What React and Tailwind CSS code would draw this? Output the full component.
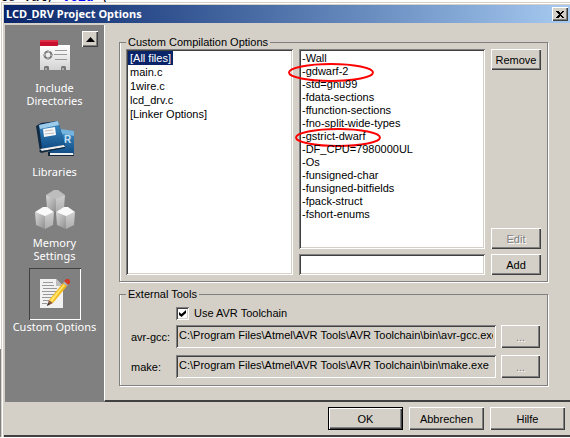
const FILES = ['[All files]', 'main.c', '1wire.c', 'lcd_drv.c', '[Linker Options]'];

const FLAGS = [
  { text: '-Wall' },
  { text: '-gdwarf-2', ring: '-left-[14px]' },
  { text: '-std=gnu99' },
  { text: '-fdata-sections' },
  { text: '-ffunction-sections' },
  { text: '-fno-split-wide-types' },
  { text: '-gstrict-dwarf', ring: '-left-[7px]' },
  { text: '-DF_CPU=7980000UL' },
  { text: '-Os' },
  { text: '-funsigned-char' },
  { text: '-funsigned-bitfields' },
  { text: '-fpack-struct' },
  { text: '-fshort-enums' },
];

const RAISED =
  'bg-[#d4d0c8] shadow-[inset_1px_1px_#fff,inset_-1px_-1px_#404040,inset_-2px_-2px_#808080]';
const SUNKEN =
  'shadow-[inset_1px_1px_#808080,inset_-1px_-1px_#fff,inset_2px_2px_#404040,inset_-2px_-2px_#d4d0c8]';

function Button({ className = '', disabled, children, ...rest }) {
  return (
    <button
      type="button"
      disabled={disabled}
      className={`flex items-center justify-center ${RAISED} ${
        disabled ? 'text-[#808080] [text-shadow:1px_1px_#fff]' : ''
      } ${className}`}
      {...rest}
    >
      {children}
    </button>
  );
}

function Group({ title, className = '', children }) {
  return (
    <fieldset className="min-w-0 border border-[#808080] px-1.5 shadow-[1px_1px_#fff,inset_1px_0_#fff]">
      <legend className="h-[13px] px-0.5 leading-[13px]">{title}</legend>
      <div className={className}>{children}</div>
    </fieldset>
  );
}

function IncludeIcon() {
  return (
    <svg width="32" height="32" viewBox="0 0 32 32">
      <defs>
        <linearGradient id="card" x1="0" y1="0" x2="0" y2="1">
          <stop offset="0" stopColor="#fff" />
          <stop offset="1" stopColor="#d2d2d2" />
        </linearGradient>
      </defs>
      <path d="M1 1h18v7H1z" fill="#c8102e" />
      <path d="M1 1h18v2H1z" fill="#dc3048" />
      <path d="M1 7h17l2-1h11v25H1z" fill="url(#card)" />
      <g fill="none" stroke="#777" strokeWidth="2">
        <circle cx="9" cy="16" r="3.5" strokeDasharray="3.5 2" strokeDashoffset="-1" />
        <path d="M9 11v3M9 18v3M4 16h3M11 16h3" strokeWidth="1" />
      </g>
      <path d="M16 11.5h12M15 15.5h13M16 20.5h12" stroke="#999" />
      <path d="M5 31v-3l1-1h3l1 1v3zM22 31v-3l1-1h3l1 1v3z" fill="#777" />
      <path d="M6 29h2v2H6zM23 29h2v2h-2z" fill="#aaa" />
    </svg>
  );
}

function LibrariesIcon() {
  return (
    <svg width="40" height="36" viewBox="0 0 40 36">
      <defs>
        <linearGradient id="book" x1="0" y1="0" x2="0" y2="1">
          <stop offset="0" stopColor="#3d8fc8" />
          <stop offset="1" stopColor="#114c85" />
        </linearGradient>
      </defs>
      <path d="M22 8l17 2v23H14v-4z" fill="url(#book)" />
      <path d="M14 32h24v2H14z" fill="#eee" />
      <path d="M13 31h2v3h24v1H13z" fill="#12263a" />
      <path d="M25 8l14 2v5l-12-2z" fill="#73b3de" />
      <text x="29" y="22" fontSize="10" fontWeight="bold" fill="#c8e3f5" fontFamily="Liberation Sans, sans-serif">
        R
      </text>
      <path d="M1 5l5-3 17-2 7 25-25 6z" fill="#102a44" />
      <path d="M4 4l19-4 7 24-23 4z" fill="url(#book)" />
      <path d="M4 4l19-4 1 4L5 8z" fill="#9dcbea" />
      <path d="M8 8l12-2 1 8-12 2z" fill="#f5f7f9" />
      <path d="M10 10l8-1M10 13l9-1" stroke="#bbb" />
      <path d="M5 28l24-4 1 2-23 4z" fill="#eee" />
      <path d="M4 30l2 2 24-5v-1L7 30z" fill="#12263a" />
    </svg>
  );
}

function Cube({ x, y, top }) {
  return (
    <g transform={`translate(${x} ${y})`}>
      <path d="M0 5L8 0h4l7 5-9 5z" fill={top} />
      <path d="M0 5l10 4v13L1 18z" fill="url(#cubeLeft)" />
      <path d="M19 5l-9 4v13l8-4z" fill="url(#cubeRight)" />
    </g>
  );
}

function MemoryIcon() {
  return (
    <svg width="42" height="40" viewBox="0 0 42 40">
      <defs>
        <linearGradient id="cubeLeft" x1="0" y1="0" x2="1" y2="1">
          <stop offset="0" stopColor="#d8d8d8" />
          <stop offset="1" stopColor="#909090" />
        </linearGradient>
        <linearGradient id="cubeRight" x1="0" y1="0" x2="0" y2="1">
          <stop offset="0" stopColor="#d0d0d0" />
          <stop offset="1" stopColor="#adadad" />
        </linearGradient>
      </defs>
      <Cube x={12} y={0} top="#bdbdbd" />
      <Cube x={1} y={17} top="#fafafa" />
      <Cube x={22} y={17} top="#fafafa" />
    </svg>
  );
}

function CustomIcon() {
  return (
    <svg width="32" height="32" viewBox="0 0 32 32">
      <path d="M1 1h16l7 7v22H1z" fill="#f1f1f1" />
      <path d="M17 1v7h7z" fill="#bdbdbd" />
      <path
        d="M4 4.5h10M3 7.5h12M4 10.5h14M3 13.5h15M4 16.5h12M3 19.5h10M4 22.5h6M3 25.5h5"
        stroke="#999"
      />
      <path d="M8 28l2-6 4 3z" fill="#8a5a3c" />
      <path d="M8 28l1-3 2 1z" fill="#333" />
      <path d="M10 22L24 5l4 3-14 17z" fill="#f3b81c" />
      <path d="M11 22L25 6l1 1-13 17z" fill="#ffe36a" />
      <path d="M24 5l2-2 4 3-2 2z" fill="#a9b4bd" />
      <path d="M25 3l2-2h3l1 2v2l-2 2z" fill="#cf3a24" />
    </svg>
  );
}

function NavItem({ icon, label, active, className = '' }) {
  return (
    <button type="button" className={`flex flex-col items-center ${className}`}>
      <span
        className={`flex h-[52px] w-[52px] items-center justify-center ${
          active ? 'shadow-[inset_1px_1px_#404040,inset_-1px_-1px_#fff]' : ''
        }`}
      >
        {icon}
      </span>
      <span className="whitespace-pre-line text-center leading-[13px]">{label}</span>
    </button>
  );
}

function PathRow({ id, label, value }) {
  return (
    <div className="flex items-center">
      <label htmlFor={id} className="w-[50px] shrink-0 pl-[5px]">
        {label}
      </label>
      <input
        id={id}
        readOnly
        defaultValue={value}
        className={`h-[23px] min-w-0 flex-1 bg-[#d4d0c8] px-[3px] pb-1 outline-none ${SUNKEN}`}
      />
      <Button disabled aria-label={`Browse ${label}`} className="ml-[5px] h-[23px] w-[39px] shrink-0">
        ...
      </Button>
    </div>
  );
}

export default function App() {
  return (
    <div className="bg-[#d4d0c8] font-['Liberation_Sans',Arial,sans-serif] text-[11px] leading-[14px] text-black">
      {/* Sliver of the editor behind the dialog */}
      <div className="flex h-0.5 items-end overflow-hidden bg-white font-['Liberation_Mono',monospace] text-[13px] leading-[8px]">
        <pre className="font-[inherit]">
          te_val, <b className="text-[#0000ff]">void</b> (
        </pre>
      </div>
      <div className="flex">
        <div className="flex w-px shrink-0 flex-col">
          <div className="flex-1 bg-white" />
          <div className="h-[88px] bg-[#808080]" />
        </div>
        <div className="min-w-0 flex-1 pt-[3px] pl-[3px] shadow-[inset_1px_1px_#d4d0c8,inset_2px_2px_#fff]">
          {/* Title bar */}
          <header className="flex h-[18px] items-center justify-between bg-linear-to-r from-[#0a246a] to-[#a6caf0] pr-0.5 pl-0.5">
            <h1 className="font-['Noto_Sans',sans-serif] font-bold text-white">LCD_DRV Project Options</h1>
            <Button aria-label="Close" className="h-[14px] w-4">
              <svg width="8" height="7" viewBox="0 0 8 7" shapeRendering="crispEdges">
                <path d="M0 0h2l2 2 2-2h2L5 3.500 8 7H6L4 5 2 7H0l3-3.500z" fill="#000" />
              </svg>
            </Button>
          </header>

          <div className="mt-0.5 flex">
            {/* Sidebar */}
            <nav className="relative ml-px flex w-[99px] shrink-0 flex-col items-center bg-[#808080] pt-1 font-['Noto_Sans',sans-serif] text-white">
              <Button aria-label="Scroll up" className="absolute top-1.5 right-1.5 h-4 w-4">
                <svg width="9" height="5" viewBox="0 0 9 5">
                  <path d="M0 5l4.500-5L9 5z" fill="#000" />
                </svg>
              </Button>
              <NavItem icon={<IncludeIcon />} label={'Include\nDirectories'} />
              <NavItem icon={<LibrariesIcon />} label="Libraries" className="mt-1.5" />
              <NavItem icon={<MemoryIcon />} label={'Memory\nSettings'} className="mt-1.5" />
              <NavItem icon={<CustomIcon />} label="Custom Options" active className="mt-1.5" />
            </nav>

            <main className="min-w-0 flex-1 border-b-2 border-l border-b-[#404040] border-l-white pt-[11px] pr-[22px] pb-[14px] pl-[14px]">
              <Group title="Custom Compilation Options" className="flex gap-1.5 pb-1.5">
                <ul className={`flex-[163] bg-white p-0.5 ${SUNKEN}`}>
                  {FILES.map((file, i) => (
                    <li key={file} className="flex h-[14px]">
                      <span className={i === 0 ? 'bg-[#0a246a] px-0.5 text-white' : 'px-0.5'}>{file}</span>
                    </li>
                  ))}
                </ul>
                <div className="flex flex-[186] flex-col gap-[5px]">
                  <ul className={`h-[200px] bg-white px-[3px] py-[3px] leading-[13px] ${SUNKEN}`}>
                    {FLAGS.map(({ text, ring }) => (
                      <li key={text} className="relative h-[13px]">
                        {text}
                        {ring && (
                          <svg
                            className={`absolute -top-0.5 ${ring}`}
                            width="86"
                            height="19"
                            viewBox="0 0 86 19"
                          >
                            <ellipse cx="43" cy="9.500" rx="42" ry="8.500" fill="none" stroke="#ff0000" strokeWidth="2" />
                          </svg>
                        )}
                      </li>
                    ))}
                  </ul>
                  <input
                    aria-label="New option"
                    className={`h-[21px] w-full min-w-0 bg-white px-1 outline-none ${SUNKEN}`}
                  />
                </div>
                <div className="flex w-[50px] shrink-0 flex-col">
                  <Button className="h-[21px]">Remove</Button>
                  <Button disabled className="mt-auto h-[21px]">
                    Edit
                  </Button>
                  <Button className="mt-[5px] h-[21px]">Add</Button>
                </div>
              </Group>

              <div className="mt-1.5">
                <Group title="External Tools" className="pr-px pb-[7px]">
                  <label className="ml-[50px] flex h-6 items-center gap-[5px]">
                    <input
                      type="checkbox"
                      defaultChecked
                      className={`peer h-[13px] w-[13px] appearance-none bg-white ${SUNKEN}`}
                    />
                    <svg className="-ml-[15px] hidden peer-checked:block" width="7" height="7" viewBox="0 0 7 7">
                      <path d="M0 2l2.500 2L7 0v3L2.500 7 0 5z" fill="#000" />
                    </svg>
                    <span className="ml-[3px]">Use AVR Toolchain</span>
                  </label>
                  <div className="flex flex-col gap-[7px]">
                    <PathRow
                      id="avr-gcc"
                      label="avr-gcc:"
                      value="C:\Program Files\Atmel\AVR Tools\AVR Toolchain\bin\avr-gcc.exe"
                    />
                    <PathRow
                      id="make"
                      label="make:"
                      value="C:\Program Files\Atmel\AVR Tools\AVR Toolchain\bin\make.exe"
                    />
                  </div>
                </Group>
              </div>
            </main>
          </div>

          {/* Dialog buttons */}
          <footer className="flex justify-end gap-1.5 border-b-2 border-[#404040] pt-[5px] pr-[5px] pb-[5px]">
            <Button className="h-[23px] w-[75px] border border-black">OK</Button>
            <Button className="h-[23px] w-[75px]">Abbrechen</Button>
            <Button className="h-[23px] w-[75px]">Hilfe</Button>
          </footer>
        </div>
      </div>
    </div>
  );
}
